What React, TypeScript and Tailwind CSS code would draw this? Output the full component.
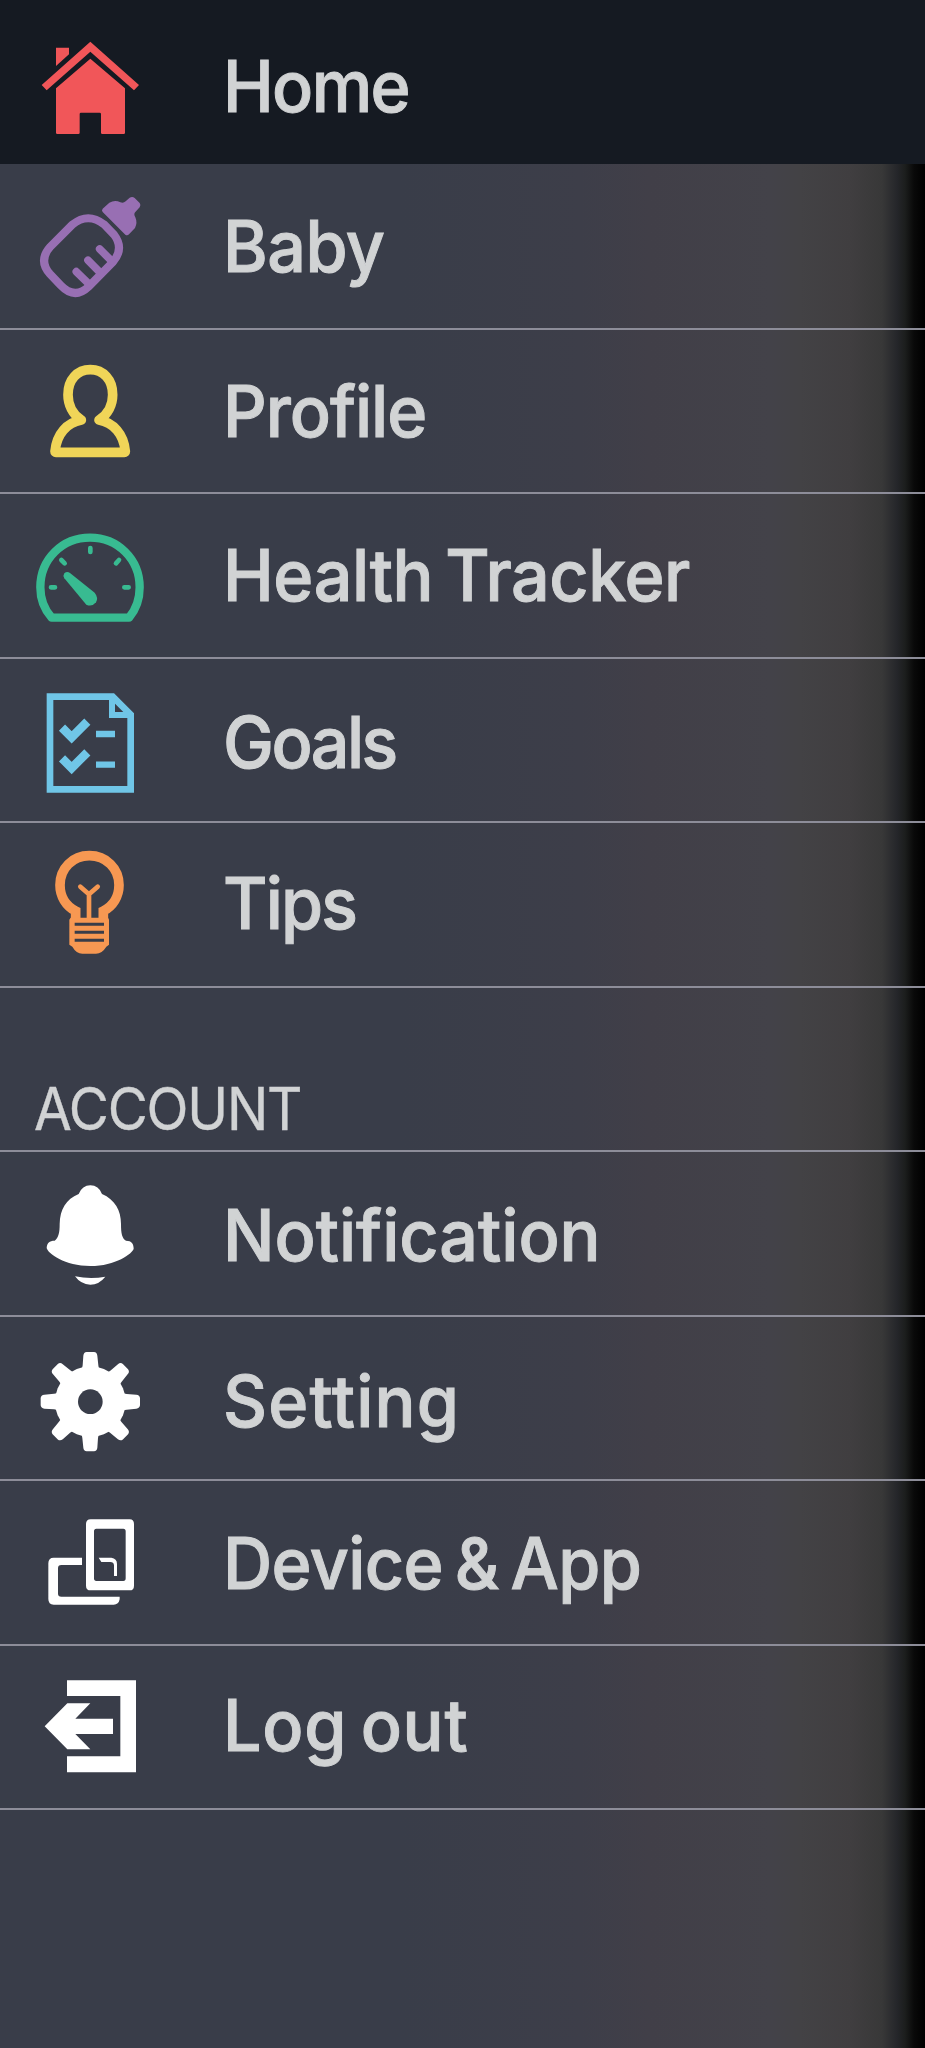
import type { ReactNode } from "react";

type MenuItem = {
  label: string;
  icon: ReactNode;
  viewBox: string;
  row: string;
  text: string;
};

const gearTooth =
  "M248 150 L250 121 Q251 111 260 110 L282 110 Q291 111 292 121 L295 150 L300 180 L242 180 Z";

const HomeIcon = (
  <g fill="#f15659">
    <path d="M168 143H207V163L168 198Z" />
    <path d="M271 125 L417 255 L402 271 L271 155 L140 271 L125 255 Z" />
    <path d="M271 176 L375 265 V398 Q375 402 371 402 H307 Q303 402 303 398 V342 Q303 338 299 338 H243 Q239 338 239 342 V398 Q239 402 235 402 H172 Q168 402 168 398 V265 Z" />
  </g>
);

const BabyIcon = (
  <g>
    <g fill="none" stroke="#986fb3" strokeLinecap="round">
      <path
        d="M217 674 L151 740 Q114 782 150 822 L182 856 Q224 900 266 860 L338 787 Q374 746 342 704 L312 673 Q264 636 217 674 Z"
        strokeWidth="24"
      />
      <path d="M299 747 L335 783 M264 781 L301 818 M229 815 L266 851" strokeWidth="23" />
    </g>
    <path
      d="M308 626 L328 608 Q345 599 361 607 Q370 611 377 604 L389 593 Q397 588 404 594 L419 609 Q424 616 419 622 L406 636 Q400 642 406 652 Q413 668 405 684 L387 703 Q382 708 376 704 L308 636 Q304 631 308 626 Z"
      fill="#986fb3"
    />
  </g>
);

const ProfileIcon = (
  <path
    d="M244 270 C218 253 204 224 204 194 C204 149 232 119 271 119 C310 119 338 149 338 194 C338 224 324 253 297 270 C340 278 371 311 376 364 Q376 367 373 367 H168 Q165 367 165 364 C170 311 201 278 244 270"
    fill="none"
    stroke="#f0d558"
    strokeWidth="29"
    strokeLinecap="round"
    strokeLinejoin="round"
  />
);

const HealthIcon = (
  <g>
    <path
      d="M155 864 H387 C408 840 419 808 419 773 C419 688 353 624 270 624 C187 624 121 688 121 773 C121 808 133 840 155 864 Z"
      fill="none"
      stroke="#38bb91"
      strokeWidth="25"
      strokeLinejoin="round"
    />
    <path
      d="M271 655V667 M184 691L194 701 M357 691L348 701 M153 773H165 M373 773H386"
      stroke="#38bb91"
      strokeWidth="14"
      strokeLinecap="round"
    />
    <path d="M193 746 Q188 738 193 731 Q201 724 210 730 L284 789 Q296 804 288 818 Q276 833 259 825 Z" fill="#38bb91" />
  </g>
);

const GoalsIcon = (
  <g fill="none" stroke="#70c6e7">
    <path d="M150 110 H338 L392 164 V388 H150 Z" strokeWidth="20" />
    <path d="M336 108 V165 H395" strokeWidth="18" />
    <path d="M186 203 L215 232 L262 185 M186 295 L215 324 L262 277" strokeWidth="26" />
    <path d="M288 222 H345 M288 314 H345" strokeWidth="19" />
  </g>
);

const TipsIcon = (
  <g>
    <path
      d="M227 779 V754 C198 739 180 710 180 676 C180 626 218 588 268 588 C318 588 357 626 357 676 C357 710 339 739 310 754 V779"
      fill="none"
      stroke="#f79852"
      strokeWidth="29"
    />
    <path d="M267 776 V704 L241 681 M267 704 L293 681" fill="none" stroke="#f79852" strokeWidth="14" strokeLinecap="round" />
    <path
      fillRule="evenodd"
      d="M212 774 H324 L327 780 V855 L319 861 Q306 882 288 882 H247 Q229 882 217 861 L208 855 V780 Z M224 789 V798 H312 V789 Z M224 813 V822 H312 V813 Z M224 837 V846 H312 V837 Z"
      fill="#f79852"
    />
  </g>
);

const NotificationIcon = (
  <g fill="#fff">
    <path d="M236 403 Q247 377 271 377 Q296 377 306 403 C345 420 363 452 363 493 C363 521 366 536 378 543 C395 543 401 552 401 567 C398 581 347 619 271 619 C195 619 143 581 140 565 C141 550 148 543 164 543 C176 534 179 518 179 493 C180 449 198 419 236 403 Z" />
    <path d="M225 650 Q271 659 316 651 Q297 675 271 675 Q242 674 225 650 Z" />
  </g>
);

const SettingIcon = (
  <g>
    <g fill="#fff">
      <circle cx="271" cy="259" r="106" />
      {[0, 45, 90, 135, 180, 225, 270, 315].map((deg) => (
        <path key={deg} d={gearTooth} transform={`rotate(${deg} 271 259)`} />
      ))}
    </g>
    <circle cx="271" cy="259" r="37" fill="#393d49" />
  </g>
);

const DeviceIcon = (
  <g fill="#fff">
    <path
      fillRule="evenodd"
      d="M272 613 H389 Q402 613 402 627 V812 Q402 826 389 826 H272 Q258 826 258 812 V627 Q258 613 272 613 Z M289 641 Q282 641 282 649 V790 Q282 798 289 798 H370 Q377 798 377 790 V649 Q377 641 370 641 Z"
    />
    <path d="M246 728 V750 H184 Q174 750 174 760 V836 Q174 845 184 845 H359 V853 Q356 869 341 869 H161 Q145 869 145 852 V745 Q145 728 161 728 Z" />
    <path d="M296 728 H334 Q351 730 351 747 V783 H342 V751 Q341 741 331 741 H304 Z" />
  </g>
);

const LogoutIcon = (
  <g fill="#fff">
    <path d="M201 360 H408 V636 H201 V588 H361 V407 H201 Z" />
    <path d="M134 498 L202 429 H271 L226 475 H339 V521 H226 L271 567 H202 Z" />
  </g>
);

const MAIN_ITEMS: MenuItem[] = [
  { label: "Home", icon: HomeIcon, viewBox: "0 0 540 492", row: "h-[164px] bg-[#151a22]", text: "pt-[51px] tracking-[-0.024em]" },
  { label: "Baby", icon: BabyIcon, viewBox: "0 492 540 492", row: "h-[166px] border-b-2", text: "pt-[47px] tracking-[-0.007em]" },
  { label: "Profile", icon: ProfileIcon, viewBox: "0 0 540 492", row: "h-[164.44px] border-b-2", text: "pt-[46px] tracking-[-0.015em]" },
  { label: "Health Tracker", icon: HealthIcon, viewBox: "0 493 540 492", row: "h-[164.44px] border-b-2", text: "pt-[46px] tracking-[-0.006em]" },
  { label: "Goals", icon: GoalsIcon, viewBox: "0 -3 540 492", row: "h-[164.44px] border-b-2", text: "pt-[48px] tracking-[-0.037em]" },
  { label: "Tips", icon: TipsIcon, viewBox: "0 490 540 492", row: "h-[164.44px] border-b-2", text: "pt-[45px] tracking-[-0.027em]" },
];

const ACCOUNT_ITEMS: MenuItem[] = [
  { label: "Notification", icon: NotificationIcon, viewBox: "0 277 540 492", row: "h-[164.44px] border-b-2", text: "pt-[48px] tracking-[0em]" },
  { label: "Setting", icon: SettingIcon, viewBox: "0 5 540 492", row: "h-[164.44px] border-b-2", text: "pt-[49px] tracking-[0.017em]" },
  { label: "Device & App", icon: DeviceIcon, viewBox: "0 498 540 492", row: "h-[164.44px] border-b-2", text: "pt-[47px] tracking-[-0.009em]" },
  { label: "Log out", icon: LogoutIcon, viewBox: "0 257 540 492", row: "h-[164.44px] border-b-2", text: "pt-[44px] tracking-[0.012em]" },
];

function MenuRow({ item }: { item: MenuItem }) {
  return (
    <a className={`flex items-start border-[#8d8d99] ${item.row}`}>
      <svg viewBox={item.viewBox} className="w-[180px] h-[164px] flex-shrink-0">
        {item.icon}
      </svg>
      <span className={`ml-[43px] origin-left scale-x-[0.96] whitespace-nowrap text-[71px] leading-none font-medium [word-spacing:-6px] [-webkit-text-stroke:1px_#d1d3d4] ${item.text}`}>
        {item.label}
      </span>
    </a>
  );
}

export default function App() {
  return (
    <nav className="w-[925px] h-[2048px] overflow-hidden flex flex-col font-['Inter','Liberation_Sans',sans-serif] text-[#d1d3d4] bg-[linear-gradient(to_right,#393d49_0px,#393d49_400px,#3d3e49_580px,#413f48_650px,#434249_770px,#434245_800px,#403e40_850px,#383838_882px,#25262a_897px,#1c1e1d_905px,#090909_914px,#000_925px)]">
      {MAIN_ITEMS.map((item) => (
        <MenuRow key={item.label} item={item} />
      ))}
      <h2 className="h-[164.44px] border-b-2 border-[#8d8d99] pl-[34px] pt-[91px] text-[59px] leading-none font-normal whitespace-nowrap">
        <span className="inline-block origin-left scale-x-[0.93] tracking-[-0.022em] [-webkit-text-stroke:0.4px_#d1d3d4]">ACCOUNT</span>
      </h2>
      {ACCOUNT_ITEMS.map((item) => (
        <MenuRow key={item.label} item={item} />
      ))}
    </nav>
  );
}
